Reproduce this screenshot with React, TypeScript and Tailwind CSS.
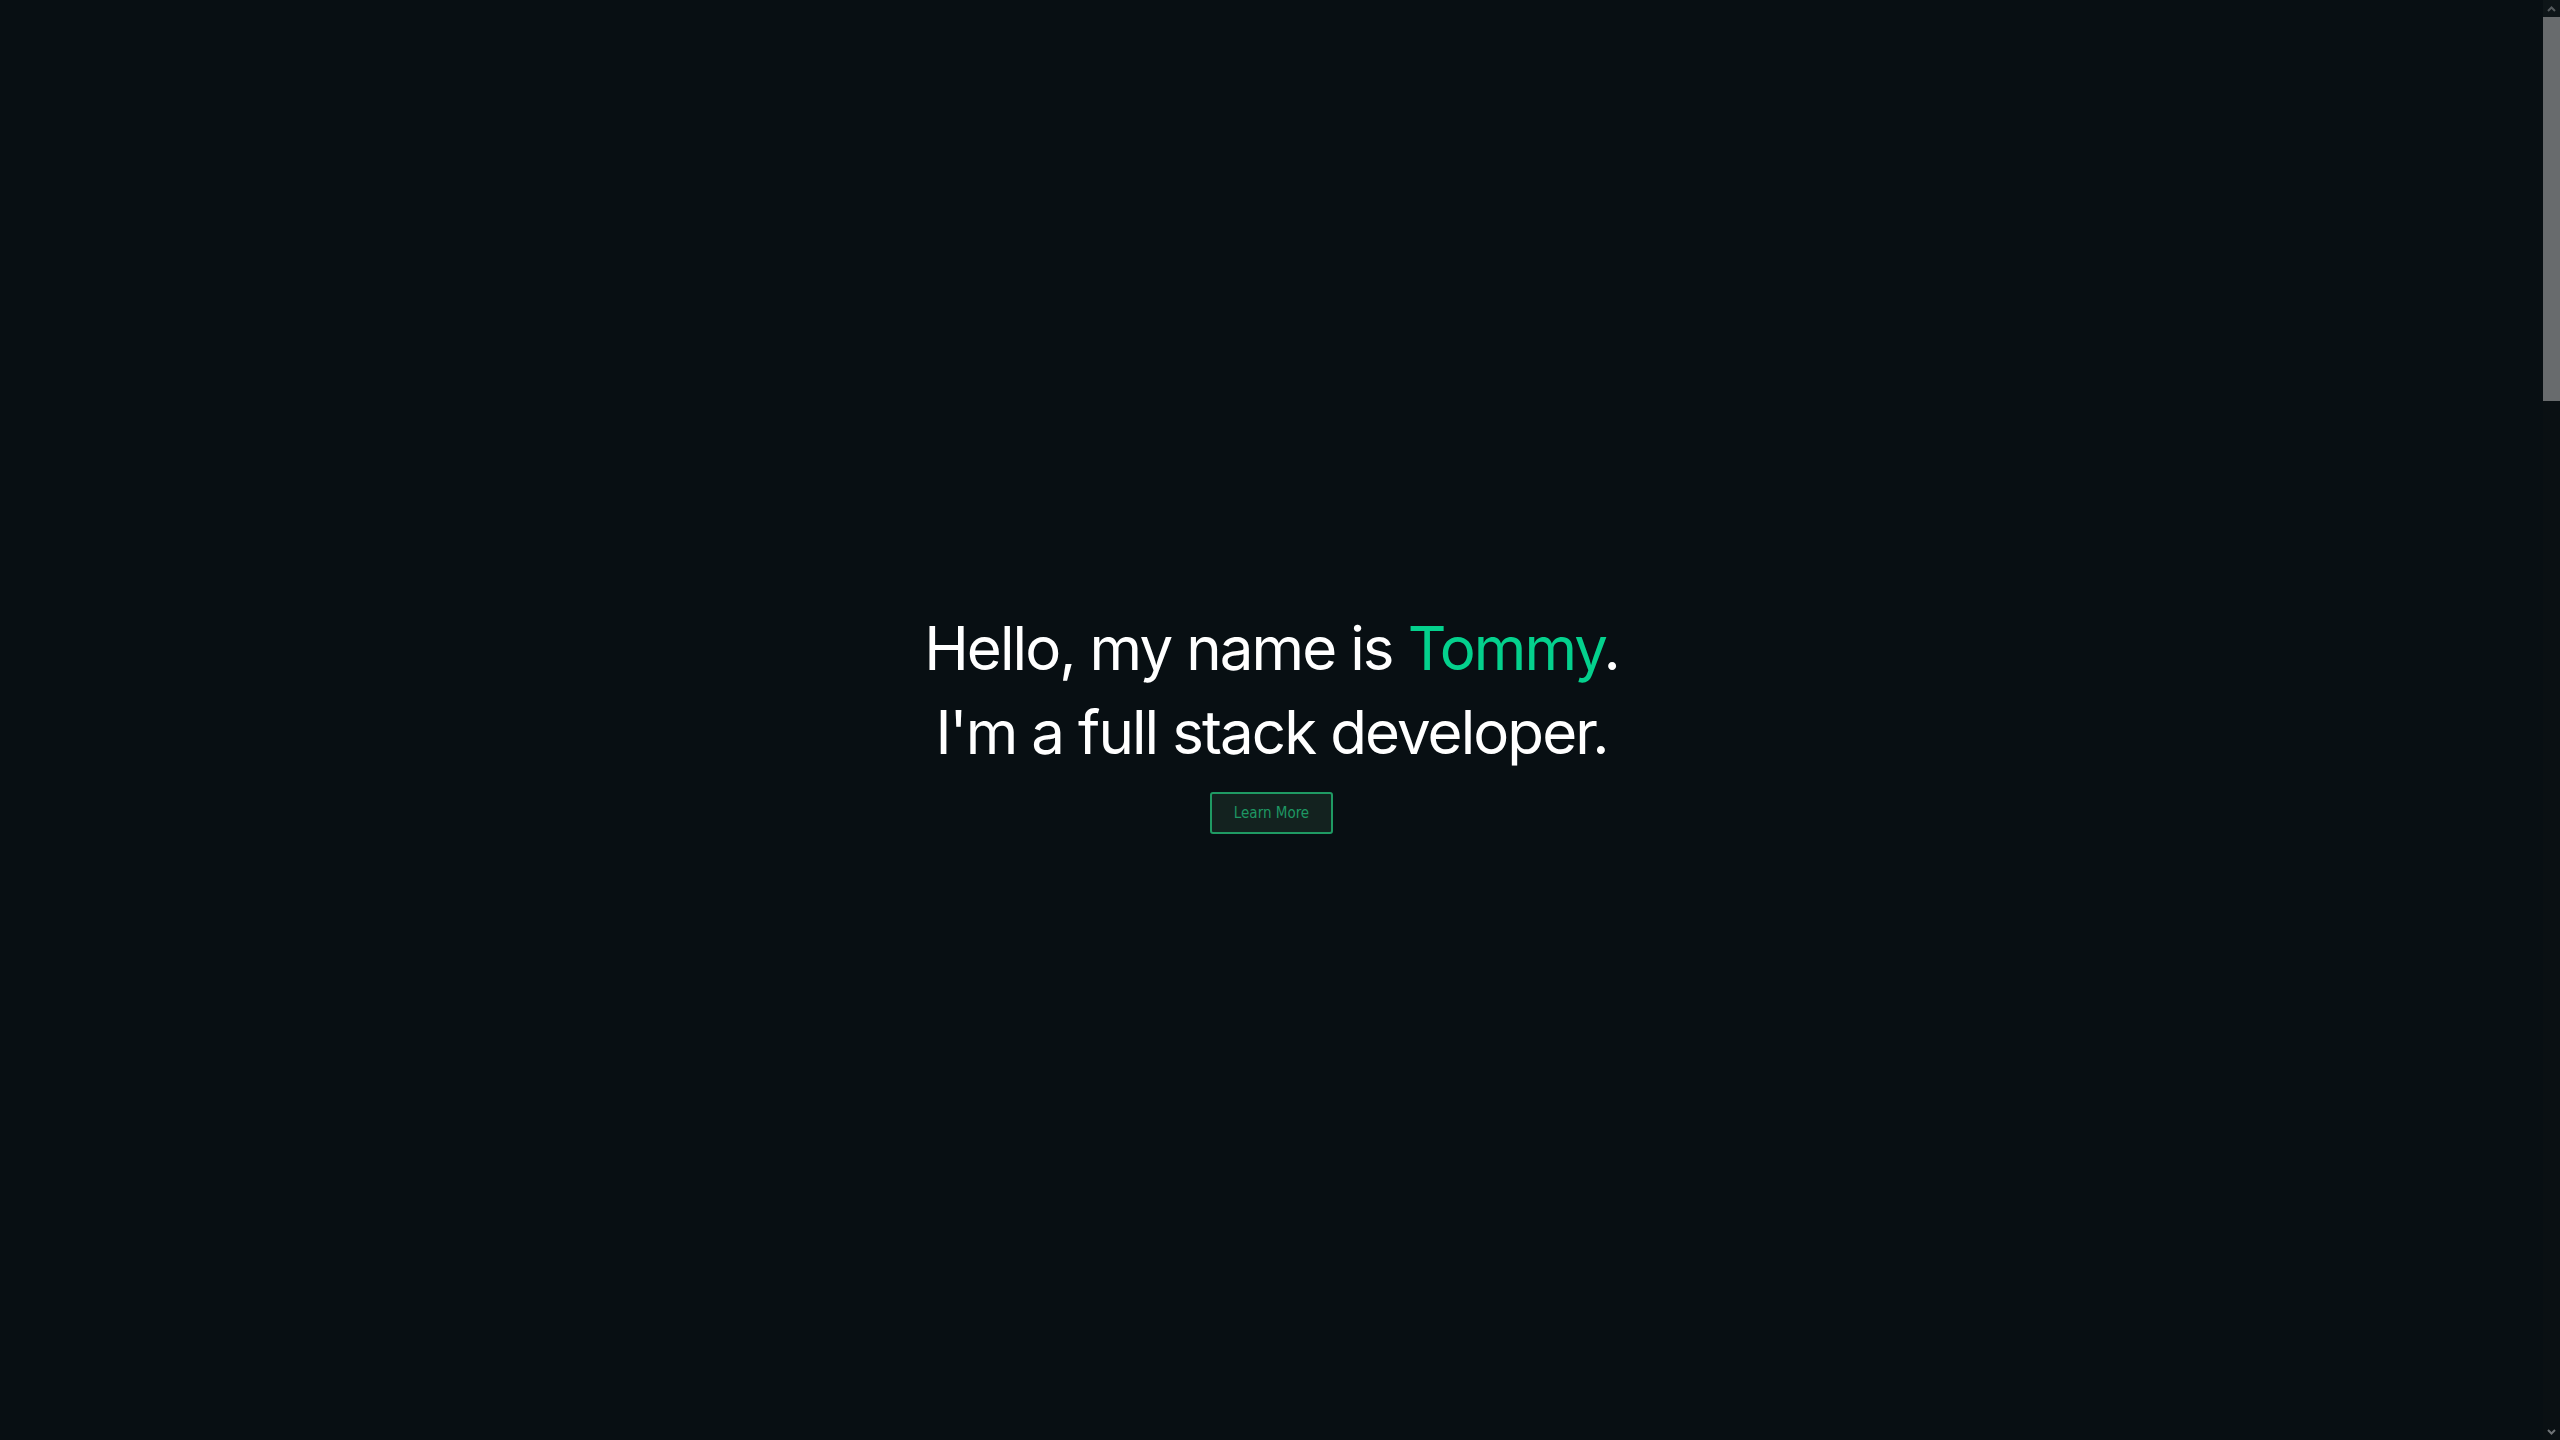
import React from "react";

export default function App() {
  return (
    <div className="flex h-screen w-full overflow-hidden bg-[#080f13]">
      <main className="flex h-screen flex-1 flex-col items-center justify-center">
        <h1 className="text-center font-['Inter',sans-serif] text-[60px] font-normal leading-[84px] tracking-[-1.9px] text-white">
          Hello, my name is <span className="text-[#04d18d]">Tommy</span>.
          <br />
          I'm a full stack developer.
        </h1>
        <button className="mt-[18px] h-[42px] w-[123px] rounded-[3px] border-2 border-[#1f9a63] bg-[#13221f] font-['DejaVu_Sans_Condensed','DejaVu_Sans',sans-serif] text-[15px] font-stretch-condensed text-[#1e9763]">
          Learn More
        </button>
      </main>
      <div className="flex h-screen w-[17px] flex-col bg-[#0a1013]">
        <div className="flex h-[17px] items-center justify-center bg-[#0e1518]">
          <svg width="9" height="6" viewBox="0 0 9 6">
            <polyline points="1,5 4.5,1.5 8,5" fill="none" stroke="#565b5e" strokeWidth="2" />
          </svg>
        </div>
        <div className="h-[384px] bg-[#686b6d]" />
        <div className="flex-1" />
        <div className="flex h-[17px] items-center justify-center">
          <svg width="9" height="6" viewBox="0 0 9 6">
            <polyline points="1,1 4.5,4.5 8,1" fill="none" stroke="#6e7275" strokeWidth="2" />
          </svg>
        </div>
      </div>
    </div>
  );
}
